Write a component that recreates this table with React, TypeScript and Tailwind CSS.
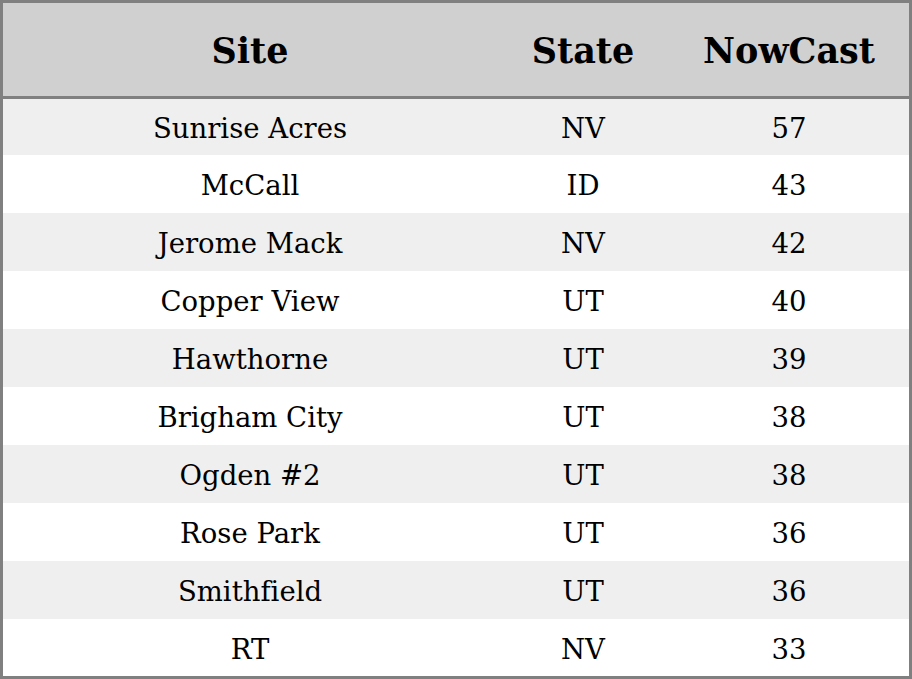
import React from 'react';

const rows: [string, string, number][] = [
  ['Sunrise Acres', 'NV', 57],
  ['McCall', 'ID', 43],
  ['Jerome Mack', 'NV', 42],
  ['Copper View', 'UT', 40],
  ['Hawthorne', 'UT', 39],
  ['Brigham City', 'UT', 38],
  ['Ogden #2', 'UT', 38],
  ['Rose Park', 'UT', 36],
  ['Smithfield', 'UT', 36],
  ['RT', 'NV', 33],
];

export default function App() {
  return (
    <div className="w-[912px] h-[679px] bg-white border-[3px] border-[#808080] flex flex-col font-['DejaVu_Serif',serif] text-black [font-variant-ligatures:none]">
      <div className="grid grid-cols-[494px_172px_1fr] h-[96px] pt-[4px] items-center bg-[#d0d0d0] border-b-[3px] border-[#808080] text-[35px] font-bold text-center shrink-0">
        <div>Site</div>
        <div>State</div>
        <div>NowCast</div>
      </div>
      <div className="flex-1 grid grid-rows-[56px_repeat(9,58px)] overflow-hidden">
        {rows.map(([site, state, val], i) => (
          <div
            key={site}
            className={`grid grid-cols-[494px_172px_1fr] pt-[4px] items-center text-center text-[27.5px] ${i % 2 === 0 ? 'bg-[#efefef]' : 'bg-white'}`}
          >
            <div>{site}</div>
            <div>{state}</div>
            <div>{val}</div>
          </div>
        ))}
      </div>
    </div>
  );
}
